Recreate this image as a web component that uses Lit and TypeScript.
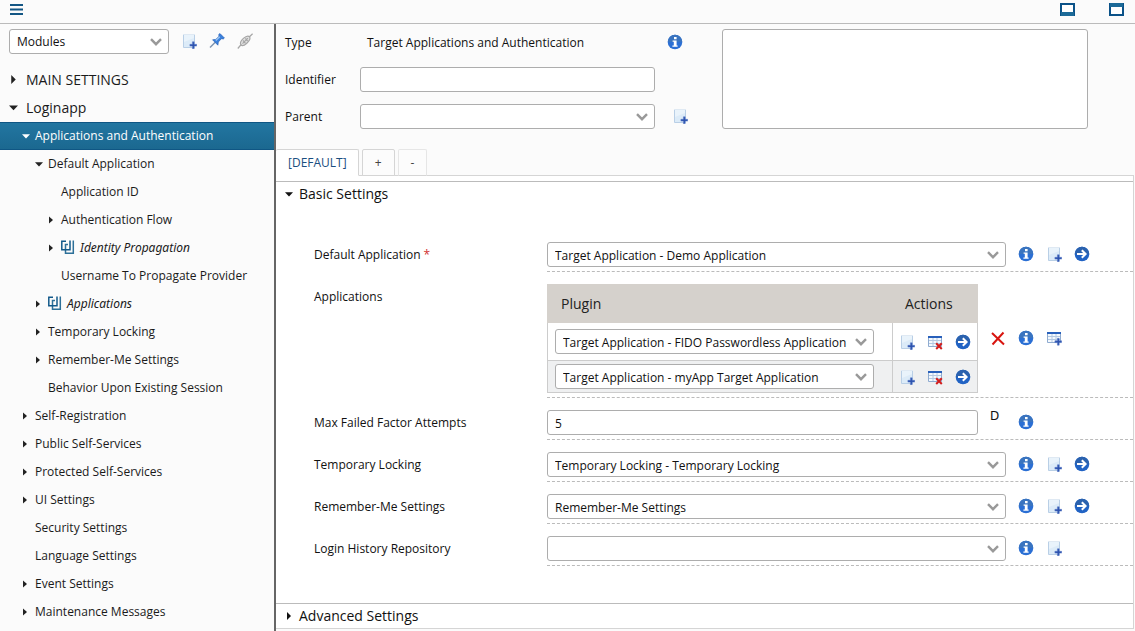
import { LitElement, html, svg, css, nothing } from "lit";
import { customElement, property } from "lit/decorators.js";
import { classMap } from "lit/directives/class-map.js";
import { styleMap } from "lit/directives/style-map.js";

const sheet = svg`
  <path d="M1.500 3.500h13v9h-13z" fill="#f4f9fe" stroke="#8fabd0"/>
  <path d="M2 6.500h12M2 9.500h12M6 4v8M10 4v8" stroke="#b4c9e2" fill="none"/>
  <path d="M1 3h14" stroke="#2860bb" stroke-width="2"/>`;

const glyphs: Record<string, unknown> = {
  info: svg`
    <circle cx="8" cy="8" r="7.3" fill="#2b6fd4"/>
    <path d="M.8 8a7.200 7.200 0 0 1 14.400 0z" fill="#3a74bf"/>
    <path d="M7 3h2.600v2.200H7zM5.600 6.400h4v5h1v1.400H5.400v-1.400h1.400V7.800H5.600z" fill="#fff"/>`,
  create: svg`
    <path d="M2.500 1.500h11v13h-11z" fill="#e9f3fb" stroke="#b9cfe6"/>
    <path d="M3 9l10-4v9H3z" fill="#dcebf8"/>
    <path d="M2 1.500h12" stroke="#dfe9f3"/>
    <path d="M11.400 8.800h1.800v2.500h2.500v1.800h-2.500v2.600h-1.800v-2.600H8.900v-1.800h2.500z" fill="#2c51ad" stroke="#5d7fc9" stroke-width=".5"/>`,
  go: svg`
    <circle cx="8" cy="8" r="7.3" fill="#2163c4"/>
    <path d="M.8 8a7.200 7.200 0 0 1 14.400 0z" fill="#2b62ae"/>
    <path d="M3 8h8.400M7.800 4.200L11.600 8l-3.800 3.800" fill="none" stroke="#fff" stroke-width="2"/>`,
  remove: svg`
    <path d="M2 3l12 11.500M13.500 2.500L2.500 14.500" fill="none" stroke="#d8150f" stroke-width="2"/>`,
  rowRemove: svg`${sheet}
    <path d="M9.200 9.200l5.600 5.800M14.800 9.200l-5.600 5.800" stroke="#d21d1d" stroke-width="2" fill="none"/>`,
  rowAdd: svg`${sheet}
    <path d="M11.400 8.300h1.800v2.500h2.500v1.800h-2.500v2.600h-1.800v-2.600H8.900v-1.800h2.500z" fill="#2c51ad" stroke="#5d7fc9" stroke-width=".5"/>`,
  pin: svg`
    <path d="M1 14.500l5.500-5.500" stroke="#7d93b0" stroke-width="1.400" fill="none"/>
    <path d="M3.600 6.800l3.200-.4 3.200-3-.2-2L11 .6 15.400 5l-1 .9-2-.2L9.300 9l-.4 3.200z" fill="#3a80dc" stroke="#2a62b8" stroke-width=".7"/>
    <path d="M6.800 7.500l4-3.800" stroke="#9cc7f6" stroke-width="1.300"/>`,
  link: svg`
    <path d="M4 12c-1.400-2 .2-4.600 2.400-6.600S11.400 2.600 12.600 3.800c1 1.600-.6 4.400-2.800 6.400S5.400 13.400 4 12z" fill="#e2e2e2"/>
    <g fill="none" stroke="#a6a6a6" stroke-width="1.200">
      <path d="M.8 15.500l3.400-4M12.200 4L15.600 .8"/>
      <path d="M4 12c-1.400-2 .2-4.600 2.400-6.600S11.400 2.600 12.600 3.800c1 1.600-.6 4.400-2.800 6.400S5.400 13.400 4 12z"/>
      <path d="M5.500 10.600l5.400-5.400M6 7.500l2.500 2.800M8.400 5.400l2.200 2.600"/>
    </g>`,
  dockBottom: svg`
    <path d="M1 3h13v11H1z" fill="#fff" stroke="#0b5288" stroke-width="2"/>
    <path d="M1 11h13v4H1z" fill="#1c6a98"/>`,
  dockTop: svg`
    <path d="M1 3h13v11H1z" fill="#fff" stroke="#0b5288" stroke-width="2"/>
    <path d="M1 2h13v4H1z" fill="#1c6a98"/>`,
  menu: svg`<path d="M1 4h13M1 8.500h13M1 13h13" stroke="#135684" stroke-width="2"/>`,
  overlap: svg`
    <g fill="none">
      <path d="M7 4.500H4.500V13.200H12.300V.5" stroke="#2d7099" stroke-width="1.500"/>
      <path d="M5 1.300H.8V9.700H9V.5" stroke="#12598a" stroke-width="1.500"/>
    </g>`,
};

const chevron = html`<svg class="chevron" width="12" height="8" viewBox="0 0 12 8" aria-hidden="true">
  <path d="M1 1.200l5 5 5-5" fill="none" stroke="#999" stroke-width="2.400"/></svg>`;

const caret = (open: boolean, size = 8, right = "M2 0v8l4-4z") => html`<svg class="caret" width=${size} height=${size} viewBox="0 0 8 8" aria-hidden="true">
  <path d=${open ? "M0 2.200h8L4 6.500z" : right} fill="currentColor"/></svg>`;

const shared = css`
  * { box-sizing: border-box; }
  button, input, select, textarea { font: inherit; color: inherit; margin: 0; }
  button { border: 0; background: none; padding: 0; cursor: pointer; }
  .icon { display: inline-grid; place-items: center; width: 28px; height: 25px; padding-bottom: 1px; flex: none; }
  .icon svg, .caret, .chevron { display: block; flex: none; }
  .field {
    display: block; width: 100%; height: 25px; padding: 1px 7px 0;
    border: 1px solid #adadad; border-radius: 3px; background: #fff; outline: 0;
  }
  .picker { display: grid; align-items: center; flex: 1; min-width: 0; }
  .picker > * { grid-area: 1 / 1; }
  .picker select { appearance: none; padding-right: 24px; }
  .picker .chevron { justify-self: end; margin-right: 7px; pointer-events: none; }
`;

const icon = (name: string, label: string) => html`<button class="icon" type="button" title=${label} aria-label=${label}>
  <svg width="16" height="16" viewBox="0 0 16 16">${glyphs[name]}</svg></button>`;

const picker = (id: string, value: string, label?: string) => html`<div class="picker">
  <select class="field" id=${id} aria-label=${label ?? nothing}><option>${value}</option></select>${chevron}</div>`;

interface Node { text: string; level: number; open?: boolean; group?: boolean; active?: boolean; }

const nodes: Node[] = [
  { text: "MAIN SETTINGS", level: 0, open: false },
  { text: "Loginapp", level: 0, open: true },
  { text: "Applications and Authentication", level: 1, open: true, active: true },
  { text: "Default Application", level: 2, open: true },
  { text: "Application ID", level: 3 },
  { text: "Authentication Flow", level: 3, open: false },
  { text: "Identity Propagation", level: 3, open: false, group: true },
  { text: "Username To Propagate Provider", level: 3 },
  { text: "Applications", level: 2, open: false, group: true },
  { text: "Temporary Locking", level: 2, open: false },
  { text: "Remember-Me Settings", level: 2, open: false },
  { text: "Behavior Upon Existing Session", level: 2 },
  { text: "Self-Registration", level: 1, open: false },
  { text: "Public Self-Services", level: 1, open: false },
  { text: "Protected Self-Services", level: 1, open: false },
  { text: "UI Settings", level: 1, open: false },
  { text: "Security Settings", level: 1 },
  { text: "Language Settings", level: 1 },
  { text: "Event Settings", level: 1, open: false },
  { text: "Maintenance Messages", level: 1, open: false },
];

@customElement("module-tree")
class ModuleTree extends LitElement {
  @property({ attribute: false }) nodes: Node[] = [];

  static styles = [shared, css`
    :host { display: block; }
    .tools { display: flex; align-items: center; padding: 5px 9px 12px; }
    .tools .picker { flex: 0 1 160px; margin-right: 6px; }
    .tree { list-style: none; margin: 0; padding: 0; }
    .node {
      display: flex; align-items: center; height: 28px; color: #1a1a1a; text-decoration: none;
      white-space: nowrap; border: solid transparent; border-width: 1px 0; padding-bottom: 1px;
    }
    .node.root { font-size: 14px; }
    .node.active { color: #fff; background: linear-gradient(#2276a1, #1b6890); border-color: #0f5684; }
    .mark { display: flex; width: 13px; flex: none; color: #222; }
    .root .mark { width: 17px; }
    .active .mark { color: #fff; }
    .group { font-family: "Noto Sans", "Open Sans", sans-serif; font-style: italic; }
    .group > svg { margin-right: 5px; flex: none; }
  `];

  render() {
    return html`
      <div class="tools">
        ${picker("scope", "Modules", "View")}
        ${icon("create", "New")}${icon("pin", "Pin")}${icon("link", "Link")}
      </div>
      <ul class="tree">
        ${this.nodes.map((n) => html`<li>
          <a href="#" class=${classMap({ node: true, root: n.level === 0, active: !!n.active, group: !!n.group })}
            style=${styleMap({ paddingLeft: `${9 + n.level * 13}px` })}>
            <span class="mark">${n.open === undefined ? nothing : n.level ? caret(n.open, 8, "M1 .5v7l4-3.500z") : caret(n.open, 9)}</span>
            ${n.group ? html`<svg width="14" height="15" viewBox="0 0 14 15">${glyphs.overlap}</svg>` : nothing}
            <span>${n.text}</span>
          </a></li>`)}
      </ul>`;
  }
}

@customElement("settings-row")
class SettingsRow extends LitElement {
  @property() label = "";
  @property() value = "";
  @property() kind = "select";
  @property({ type: Boolean }) required = false;
  @property({ attribute: false }) actions: string[] = [];

  static styles = [shared, css`
    :host { display: grid; grid-template-columns: 233px 1fr; padding-left: 38px; }
    .name { padding-top: 12px; line-height: 25px; }
    .star { color: #d03030; margin-left: 3px; }
    .body { display: flex; align-items: center; padding: 12px 0 4px; border-bottom: 1px dashed #bbb; min-width: 0; }
    .picker select { padding-top: 3px; }
    .actions { display: flex; width: 121px; margin-left: 6px; flex: none; }
    .extra { display: grid; place-items: center; width: 28px; margin-left: 6px; margin-right: -6px; flex: none; }
    .default { align-self: start; place-items: start; padding-left: 6px; font: 12px/12px "DejaVu Sans", sans-serif; }
    table { flex: 1; border-collapse: collapse; table-layout: fixed; min-width: 0; }
    th { background: #d5d1cc; font-weight: 400; font-size: 14px; text-align: left; height: 38px; padding: 0 13px; border: 1px solid #d5d1cc; color: #222; }
    td { border: 1px solid #ccc; padding: 6px 18px 6px 7px; }
    tr:nth-child(even) td { background: #eff0f1; padding-top: 3px; padding-bottom: 3px; }
    th:last-child { border-left-color: #e5e3e0; padding: 0 12px; }
    th:last-child, td:last-child { width: 85px; }
    td:last-child, tr:nth-child(even) td:last-child { padding: 0; }
    .set { display: flex; }
    .set .icon { height: 24px; padding-bottom: 0; }
  `];

  private control() {
    if (this.kind === "text")
      return html`<input class="field" id="f" .value=${this.value}><span class="extra default">D</span>`;
    if (this.kind === "table")
      return html`<table>
        <thead><tr><th>Plugin</th><th>Actions</th></tr></thead>
        <tbody>${["Target Application - FIDO Passwordless Application", "Target Application - myApp Target Application"].map((v, i) => html`
          <tr><td>${picker(`p${i}`, v, "Plugin")}</td>
          <td><div class="set">${icon("create", "New")}${icon("rowRemove", "Remove row")}${icon("go", "Open")}</div></td></tr>`)}
        </tbody></table><span class="extra">${icon("remove", "Clear")}</span>`;
    return picker("f", this.value);
  }

  render() {
    const name = html`${this.label}${this.required ? html`<span class="star">*</span>` : nothing}`;
    return html`
      ${this.kind === "table" ? html`<span class="name">${name}</span>` : html`<label class="name" for="f">${name}</label>`}
      <div class="body">${this.control()}
        <div class="actions">${this.actions.map((a) => icon(a, a))}</div>
      </div>`;
  }
}

@customElement("app-root")
class AppRoot extends LitElement {
  static styles = [shared, css`
    :host {
      display: flex; flex-direction: column; height: 100vh; overflow: hidden;
      font: 12px/18px "Open Sans", "Noto Sans", sans-serif; color: #111; background: #fbfbfb;
    }
    .bar { display: flex; align-items: center; height: 24px; padding: 0 4px 4px 3px; border-bottom: 1px solid #bbb; flex: none; }
    .bar .icon:nth-child(2) { margin-left: auto; margin-right: 21px; }
    .columns { display: flex; flex: 1; min-height: 0; }
    module-tree { width: 276px; flex: none; border-right: 2px solid #666; overflow: hidden; }
    main { flex: 1; min-width: 0; padding-right: 1px; overflow: hidden; }
    .head { display: grid; grid-template-columns: 370px 67px minmax(0, 366px); padding: 5px 9px 20px; }
    .facts, .side { display: grid; grid-auto-rows: 25px; row-gap: 12px; align-items: center; align-content: start; padding-top: 1px; height: 100px; }
    .facts { grid-template-columns: 75px 1fr; }
    .type { padding-left: 7px; }
    .side { padding-left: 6px; justify-items: start; }
    .side .icon:last-child { grid-row: 3; margin-left: 5px; }
    .notes { height: 100px; resize: none; padding: 6px; }
    .tabs { display: flex; gap: 3px; height: 27px; border-bottom: 1px solid #d5d5d5; }
    .tab { height: 27px; padding: 0 12px; border: 1px solid #d5d5d5; border-radius: 2px 2px 0 0; color: #444; background: #fcfcfc; }
    .tab.current { background: #fff; color: #1b4e80; border-left: 0; border-bottom-color: #fff; padding-right: 11px; }
    .tab.off { border-color: #e6e6e6 #e6e6e6 #d5d5d5; }
    .panel { background: #fff; border: solid #d5d5d5; border-width: 0 1px 1px 0; padding-top: 5px; }
    .section { display: flex; align-items: center; gap: 6px; width: 100%; height: 25px; padding: 0 9px; border-top: 1px solid #bbb; font-size: 14px; }
    .rows { padding: 24px 0 37px; }
  `];

  render() {
    const all = ["info", "create", "go"];
    return html`
      <header class="bar">${icon("menu", "Menu")}${icon("dockBottom", "Dock bottom")}${icon("dockTop", "Dock top")}</header>
      <div class="columns">
        <module-tree .nodes=${nodes}></module-tree>
        <main>
          <div class="head">
            <div class="facts">
              <span>Type</span><span class="type">Target Applications and Authentication</span>
              <label for="identifier">Identifier</label><input class="field" id="identifier">
              <label for="parent">Parent</label>${picker("parent", "")}
            </div>
            <div class="side">${icon("info", "Info")}${icon("create", "New")}</div>
            <textarea class="field notes" aria-label="Notes"></textarea>
          </div>
          <nav class="tabs">
            <button class="tab current">[DEFAULT]</button>
            <button class="tab">+</button>
            <button class="tab off">-</button>
          </nav>
          <div class="panel">
            <button class="section">${caret(true)}<span>Basic Settings</span></button>
            <div class="rows">
              <settings-row label="Default Application" required value="Target Application - Demo Application" .actions=${all}></settings-row>
              <settings-row label="Applications" kind="table" .actions=${["info", "rowAdd"]}></settings-row>
              <settings-row label="Max Failed Factor Attempts" kind="text" value="5" .actions=${["info"]}></settings-row>
              <settings-row label="Temporary Locking" value="Temporary Locking - Temporary Locking" .actions=${all}></settings-row>
              <settings-row label="Remember-Me Settings" value="Remember-Me Settings" .actions=${all}></settings-row>
              <settings-row label="Login History Repository" .actions=${["info", "create"]}></settings-row>
            </div>
            <button class="section">${caret(false)}<span>Advanced Settings</span></button>
          </div>
        </main>
      </div>`;
  }
}
